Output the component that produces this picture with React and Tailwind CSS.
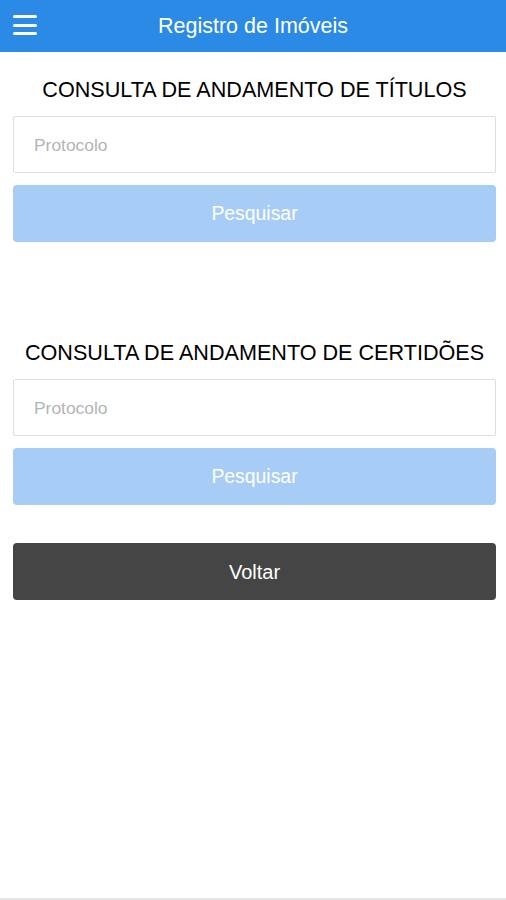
import { useState } from 'react';

function Hamburger() {
  return (
    <button className="absolute left-[13px] top-[15px] flex flex-col gap-[5.5px] w-[24px]" aria-label="Menu">
      <span className="block h-[3px] w-full bg-white rounded-sm" />
      <span className="block h-[3px] w-full bg-white rounded-sm" />
      <span className="block h-[3px] w-full bg-white rounded-sm" />
    </button>
  );
}

function ConsultaForm({ title }) {
  const [protocolo, setProtocolo] = useState('');

  return (
    <section className="flex flex-col">
      <h2 className="text-center text-[21.6px] leading-[28px] text-black">{title}</h2>
      <input
        value={protocolo}
        onChange={(e) => setProtocolo(e.target.value)}
        placeholder="Protocolo"
        className="mt-[12px] h-[57px] w-full border border-[#dedede] rounded-[2px] px-[20px] pt-[2px] text-[17.4px] text-[#333] placeholder:text-[#b4b4b4] outline-none"
      />
      <button
        disabled={!protocolo}
        className="mt-[12px] h-[57px] w-full rounded-[4px] bg-[#a7cdf6] text-white text-[19.4px]"
      >
        Pesquisar
      </button>
    </section>
  );
}

export default function App() {
  return (
    <div className="min-h-[900px] bg-white flex flex-col font-['Liberation_Sans',Arial,sans-serif] border-b-2 border-[#e6e6e6]">
      <header className="relative h-[52px] bg-[#2b8ae6] flex items-center justify-center">
        <Hamburger />
        <h1 className="text-white text-[21.5px]">Registro de Imóveis</h1>
      </header>

      <main className="pl-[13px] pr-[10px] pt-[24px] flex flex-col">
        <ConsultaForm title="CONSULTA DE ANDAMENTO DE TÍTULOS" />
        <div className="h-[97px]" />
        <ConsultaForm title="CONSULTA DE ANDAMENTO DE CERTIDÕES" />
        <button className="mt-[38px] h-[57px] w-full rounded-[4px] bg-[#454545] text-white text-[20px]">
          Voltar
        </button>
      </main>
    </div>
  );
}
